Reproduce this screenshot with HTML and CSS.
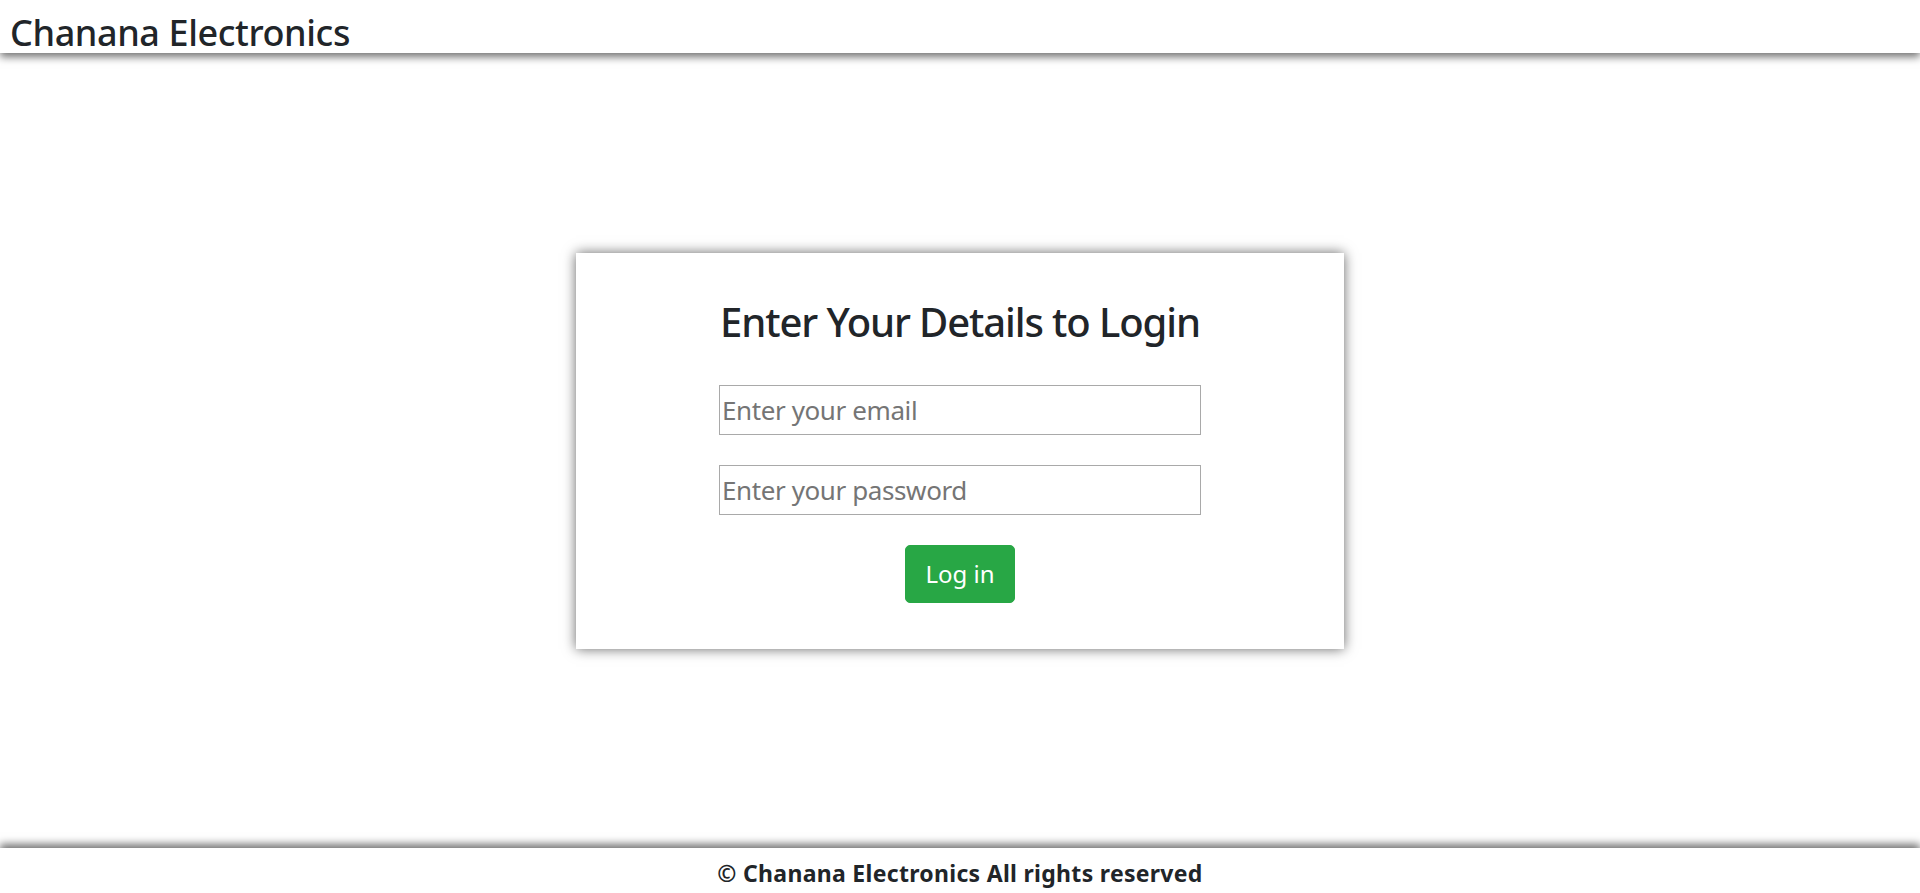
FILE: index.html
```html
<!DOCTYPE html>
<html lang="en">
<head>
<meta charset="utf-8">
<title>Chanana Electronics - Login</title>
<link rel="stylesheet" href="styles.css">
</head>
<body>
  <header class="site-header">
    <h2 class="brand">Chanana Electronics</h2>
  </header>
  <main class="site-main">
    <form class="login-card">
      <h2 class="login-title">Enter Your Details to Login</h2>
      <input class="login-input" type="email" placeholder="Enter your email">
      <input class="login-input" type="password" placeholder="Enter your password">
      <button class="login-btn" type="button">Log in</button>
    </form>
  </main>
  <footer class="site-footer">
    <p class="copyright">© Chanana Electronics All rights reserved</p>
  </footer>
</body>
</html>
```
FILE: styles.css
```css
* { box-sizing: border-box; }
html, body { margin: 0; padding: 0; }
body {
  font-family: "Noto Sans", "Open Sans", sans-serif;
  color: #212529;
  background: #fff;
  min-height: 100vh;
  display: flex;
  flex-direction: column;
  overflow: hidden;
}
.site-header {
  height: 53px;
  flex: 0 0 53px;
  background: #fff;
  box-shadow: 0 4px 8px rgba(0, 0, 0, 0.55);
  position: relative;
  z-index: 2;
  display: flex;
  align-items: flex-end;
}
.brand {
  margin: 0 0 0 10px;
  font-size: 36px;
  font-weight: 500;
  line-height: 40px;
  letter-spacing: -0.4px;
}
.site-main {
  flex: 1;
  display: flex;
  align-items: center;
  justify-content: center;
}
.login-card {
  width: 768px;
  height: 396px;
  background: #fff;
  box-shadow: 0 0 12px rgba(0, 0, 0, 0.6);
  display: flex;
  flex-direction: column;
  align-items: center;
  padding-top: 44px;
}
.login-title {
  margin: 0 0 38px;
  font-size: 40px;
  font-weight: 500;
  line-height: 50px;
  letter-spacing: -1.1px;
}
.login-input {
  width: 482px;
  height: 50px;
  border: 1px solid #a9a9a9;
  border-radius: 0;
  padding: 1px 2px;
  margin: 0 0 30px;
  font-family: inherit;
  font-size: 26px;
  letter-spacing: -0.4px;
  color: #212529;
  outline: none;
}
.login-input::placeholder { color: #757575; }
.login-btn {
  width: 110px;
  height: 58px;
  border: 1px solid #28a745;
  border-radius: 5px;
  background: #28a745;
  color: #fff;
  font-family: inherit;
  font-size: 24px;
  line-height: 1;
  padding: 0;
}
.site-footer {
  flex: 0 0 45px;
  height: 45px;
  background: #fff;
  box-shadow: 0 -4px 8px rgba(0, 0, 0, 0.55);
  position: relative;
  z-index: 2;
  display: flex;
  justify-content: center;
}
.copyright {
  margin: 10px 0 0;
  font-size: 23px;
  font-weight: 700;
  line-height: 30px;
  letter-spacing: 0.3px;
}
```
